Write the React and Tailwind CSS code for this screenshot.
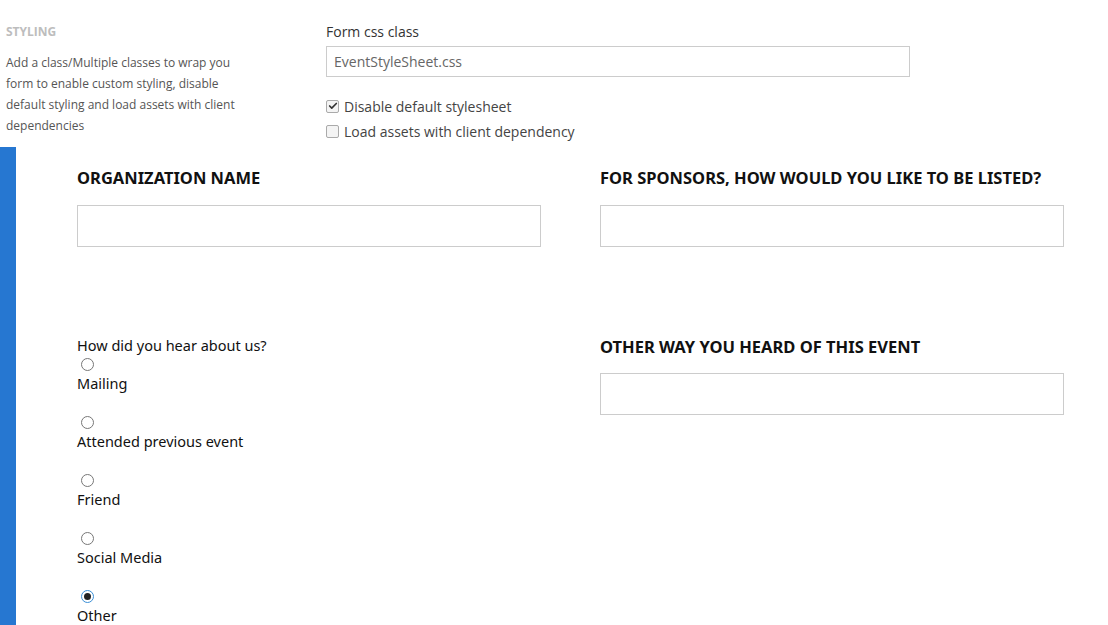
import { Check } from 'lucide-react'

const options = [
  { label: 'Mailing', checked: false },
  { label: 'Attended previous event', checked: false },
  { label: 'Friend', checked: false },
  { label: 'Social Media', checked: false },
  { label: 'Other', checked: true },
]

function Radio({ checked }) {
  return checked ? (
    <span className="w-[13px] h-[13px] rounded-full border border-[#3b8fd6] bg-white flex items-center justify-center">
      <span className="w-[7px] h-[7px] rounded-full bg-[#222]" />
    </span>
  ) : (
    <span className="block w-[13px] h-[13px] rounded-full border border-[#777] bg-white" />
  )
}

function Field({ title, gap = 'mt-[15px]' }) {
  return (
    <div className="w-[464px]">
      <h3 className="text-[16.5px] leading-6 font-bold text-[#111] uppercase">{title}</h3>
      <div className={`${gap} h-[42px] border border-[#ccc] bg-white`} />
    </div>
  )
}

export default function App() {
  return (
    <div className="w-[1108px] h-[625px] bg-white overflow-hidden">
      <div className="flex pt-[22px] pb-[6px] font-['Open_Sans',sans-serif]">
        <div className="w-[326px] pl-[6px] pr-[80px] pt-[2px]">
          <h2 className="text-[12px] leading-4 font-bold text-[#bdbdbd] uppercase">Styling</h2>
          <p className="mt-[12px] text-[12px] leading-[21px] text-[#555]">
            Add a class/Multiple classes to wrap you form to enable custom styling, disable default styling and load assets with client dependencies
          </p>
        </div>
        <div className="w-[584px]">
          <label className="block text-[14px] leading-5 text-[#333]">Form css class</label>
          <div className="mt-[4px] h-[31px] border border-[#ccc] flex items-center px-[7px] text-[14px] text-[#666]">
            EventStyleSheet.css
          </div>
          <div className="mt-[19px] flex items-center gap-[5px] h-5 text-[14px] text-[#444]">
            <span className="w-[13px] h-[13px] rounded-[2px] border border-[#aaa] bg-[#f4f4f4] flex items-center justify-center">
              <Check size={10} strokeWidth={4} className="text-[#333]" />
            </span>
            Disable default stylesheet
          </div>
          <div className="mt-[5px] flex items-center gap-[5px] h-5 text-[14px] text-[#444]">
            <span className="w-[13px] h-[13px] rounded-[2px] border border-[#aaa] bg-[#f4f4f4]" />
            Load assets with client dependency
          </div>
        </div>
      </div>

      <div className="flex h-full font-['Noto_Sans',sans-serif]">
        <div className="w-4 shrink-0 bg-[#2677d1]" />
        <div className="pl-[61px] pt-[19px]">
          <div className="flex gap-[59px]">
            <Field title="Organization Name" />
            <Field title="For sponsors, how would you like to be listed?" />
          </div>
          <div className="flex gap-[59px] mt-[88px]">
            <div className="w-[464px]">
              <p className="text-[14.5px] leading-5 text-[#111]">How did you hear about us?</p>
              {options.map((o) => (
                <div key={o.label} className="mb-[23px]">
                  <div className="mt-[3px] pl-[4px]">
                    <Radio checked={o.checked} />
                  </div>
                  <div className="mt-[2px] text-[14.5px] leading-5 text-[#111]">{o.label}</div>
                </div>
              ))}
            </div>
            <Field title="Other way you heard of this event" gap="mt-[14px]" />
          </div>
        </div>
      </div>
    </div>
  )
}
